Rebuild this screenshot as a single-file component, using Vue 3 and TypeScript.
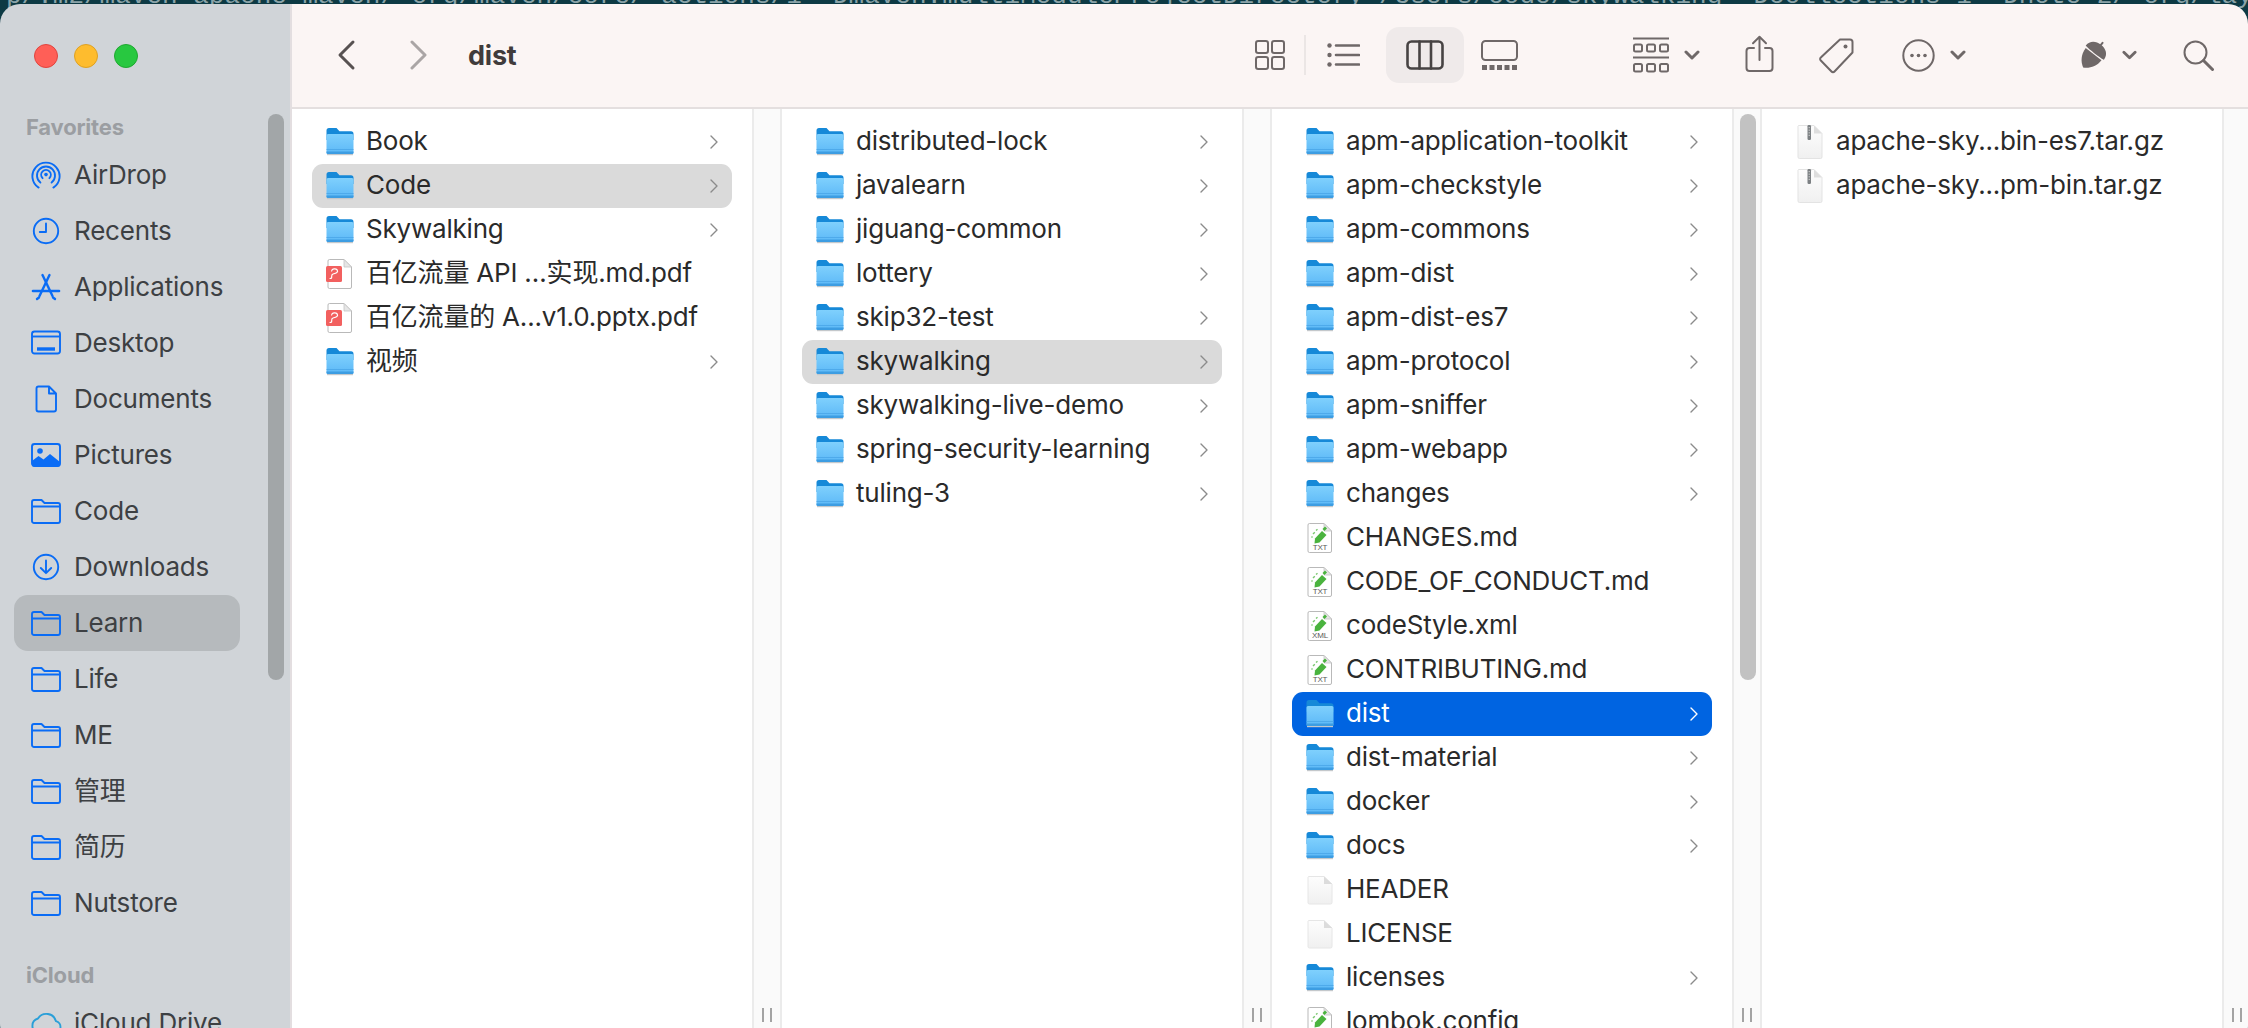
<script setup lang="ts">
type Row = { name: string; icon: string; dir?: boolean; sel?: string };
const side = [
  { l: 'AirDrop', i: 'airdrop' }, { l: 'Recents', i: 'recents' }, { l: 'Applications', i: 'apps' },
  { l: 'Desktop', i: 'desktop' }, { l: 'Documents', i: 'documents' }, { l: 'Pictures', i: 'pictures' },
  { l: 'Code', i: 'fold' }, { l: 'Downloads', i: 'downloads' }, { l: 'Learn', i: 'fold', on: true },
  { l: 'Life', i: 'fold' }, { l: 'ME', i: 'fold' }, { l: '管理', i: 'fold' }, { l: '简历', i: 'fold' }, { l: 'Nutstore', i: 'fold' },
];
const d = (name: string, sel?: string): Row => ({ name, icon: 'folder', dir: true, sel });
const f = (name: string, icon: string): Row => ({ name, icon });
const cols: Row[][] = [
  [d('Book'), d('Code', 'gray'), d('Skywalking'), f('百亿流量 API …实现.md.pdf', 'pdf'), f('百亿流量的 A...v1.0.pptx.pdf', 'pdf'), d('视频')],
  [d('distributed-lock'), d('javalearn'), d('jiguang-common'), d('lottery'), d('skip32-test'), d('skywalking', 'gray'), d('skywalking-live-demo'), d('spring-security-learning'), d('tuling-3')],
  [d('apm-application-toolkit'), d('apm-checkstyle'), d('apm-commons'), d('apm-dist'), d('apm-dist-es7'), d('apm-protocol'), d('apm-sniffer'), d('apm-webapp'), d('changes'),
   f('CHANGES.md', 'txt'), f('CODE_OF_CONDUCT.md', 'txt'), f('codeStyle.xml', 'xml'), f('CONTRIBUTING.md', 'txt'), d('dist', 'blue'), d('dist-material'), d('docker'), d('docs'),
   f('HEADER', 'blank'), f('LICENSE', 'blank'), d('licenses'), f('lombok.config', 'txt')],
  [f('apache-sky...bin-es7.tar.gz', 'zip'), f('apache-sky...pm-bin.tar.gz', 'zip')],
];
const wall = 'p/.m2/maven-apache-maven/ org/maven/core/ actions/1 -Dmaven.multiModuleProjectDirectory=/Users/code/skywalking -Dcollections=1 -Dnote=2/ org/layouts-active-collections=1 -Dnotes=2/ layouts-active-collections=1 -Dnote=';
</script>

<template>
  <div class="page">
    <div class="wall">{{ wall }}</div>

    <svg class="defs" width="0" height="0">
      <defs>
        <linearGradient id="fg" x1="0" y1="0" x2="0" y2="1"><stop offset="0" stop-color="#7fd0fd" /><stop offset="1" stop-color="#5cb8f7" /></linearGradient>
        <linearGradient id="pg" x1="0" y1="0" x2="0" y2="1"><stop offset="0" stop-color="#fdfdfd" /><stop offset="1" stop-color="#f0f0f0" /></linearGradient>
        <symbol id="i-airdrop" viewBox="0 0 30 30"><g fill="none" stroke="currentColor" stroke-width="1.9" stroke-linecap="round"><path d="M7.6 27.6A13.6 13.6 0 1 1 22.4 27.6" /><path d="M9.4 22.6A9 9 0 1 1 20.6 22.6" /><path d="M11.6 18.2A4.8 4.8 0 1 1 18.4 18.2" /></g><circle cx="15" cy="14.6" r="1.8" fill="currentColor" /></symbol>
        <symbol id="i-recents" viewBox="0 0 30 30"><circle cx="15" cy="15" r="12.2" fill="none" stroke="currentColor" stroke-width="1.9" /><path d="M15 7.5V16H8.8" fill="none" stroke="currentColor" stroke-width="1.9" stroke-linecap="round" stroke-linejoin="round" /></symbol>
        <symbol id="i-apps" viewBox="0 0 30 30"><g fill="none" stroke="currentColor" stroke-linecap="round"><path d="M11.5 3L21.5 24" stroke-width="2.4" /><path d="M18.5 3L8.5 24" stroke-width="2.4" /><path d="M2 19H28" stroke-width="2.6" /><path d="M8 25.5L6 27M22 25.5L24 27" stroke-width="2.4" /></g></symbol>
        <symbol id="i-desktop" viewBox="0 0 30 30"><rect x="1" y="3.5" width="28" height="22" rx="2.5" fill="none" stroke="currentColor" stroke-width="1.9" /><path d="M1 8.5H29" stroke="currentColor" stroke-width="1.9" /><path d="M6 21H24" stroke="currentColor" stroke-width="3.4" /></symbol>
        <symbol id="i-documents" viewBox="0 0 30 30"><path d="M7.5 2.5H18L25 9.5V25.5A2 2 0 0 1 23 27.5H7.5A2 2 0 0 1 5.5 25.5V4.5A2 2 0 0 1 7.5 2.5ZM18 2.5V9.5H25" fill="none" stroke="currentColor" stroke-width="1.9" stroke-linejoin="round" /></symbol>
        <symbol id="i-pictures" viewBox="0 0 30 30"><rect x="1" y="4" width="28" height="22" rx="2.5" fill="none" stroke="currentColor" stroke-width="1.9" /><circle cx="9" cy="11" r="2.8" fill="currentColor" /><path d="M1 25V21L7.5 16L12.5 19.5L19 14L29 22V25A1.5 1.5 0 0 1 27.5 26.5H2.5A1.5 1.5 0 0 1 1 25Z" fill="currentColor" /></symbol>
        <symbol id="i-fold" viewBox="0 0 30 30"><path d="M3 4H10.5L13.5 7H27A2 2 0 0 1 29 9V25A2 2 0 0 1 27 27H3A2 2 0 0 1 1 25V6A2 2 0 0 1 3 4ZM1 10.5H29" fill="none" stroke="currentColor" stroke-width="1.9" stroke-linejoin="round" /></symbol>
        <symbol id="i-downloads" viewBox="0 0 30 30"><circle cx="15" cy="15" r="12.2" fill="none" stroke="currentColor" stroke-width="1.9" /><path d="M15 8.5V21M9.8 16L15 21.2L20.2 16" fill="none" stroke="currentColor" stroke-width="1.9" stroke-linecap="round" stroke-linejoin="round" /></symbol>
        <symbol id="i-cloud" viewBox="0 0 32 30"><path d="M8 25H24.5A6 6 0 0 0 26 13.2A10 10 0 0 0 8 10.5A7.5 7.5 0 0 0 8 25Z" fill="none" stroke="currentColor" stroke-width="1.9" stroke-linejoin="round" /></symbol>

        <symbol id="i-folder" viewBox="0 0 28 28">
          <path d="M.5 2.5A2.5 2.5 0 0 1 3 0H10.5L13.5 3.2H25A2.5 2.5 0 0 1 27.5 5.7V12H.5Z" fill="#1689d8" />
          <path d="M.5 7.5A1.5 1.5 0 0 1 2 6H26A1.5 1.5 0 0 1 27.5 7.5V24.5A1.5 1.5 0 0 1 26 26H2A1.5 1.5 0 0 1 .5 24.5Z" fill="url(#fg)" />
          <rect x=".5" y="21.2" width="27" height=".8" fill="#49a5e8" />
          <path d="M.5 23.4H27.5V24.5A1.5 1.5 0 0 1 26 26H2A1.5 1.5 0 0 1 .5 24.5Z" fill="#3d9de2" />
          <rect x="1" y="26" width="26" height="1.2" fill="#c4c8cb" />
        </symbol>
        <symbol id="i-paper" viewBox="0 0 28 32">
          <path d="M3.5 1.5H18L25.5 9V29A1.5 1.5 0 0 1 24 30.5H3.5A1.5 1.5 0 0 1 2 29V3A1.5 1.5 0 0 1 3.5 1.5Z" fill="#fff" stroke="#b9b9b9" />
          <path d="M18 1.5V9H25.5Z" fill="#e6e6e6" stroke="#c4c4c4" stroke-width=".8" />
        </symbol>
        <symbol id="i-pdf" viewBox="0 0 28 32">
          <use href="#i-paper" width="28" height="32" />
          <rect x="0" y="8" width="16" height="16" rx="1.5" fill="#f2605f" />
          <path d="M4 20.5C7.5 20.5 4 17 7 16C10.5 15 12.5 14.2 11.2 12C9.7 10.2 6 10.6 5.6 13" fill="none" stroke="#fff" stroke-width="1.2" stroke-linecap="round" />
        </symbol>
        <symbol id="i-blank" viewBox="0 0 28 32">
          <path d="M2.5 2.5H18L26 10V28.5A1.5 1.5 0 0 1 24.5 30H3.5A1.5 1.5 0 0 1 2 28.5V3Z" fill="url(#pg)" stroke="#e6e6e6" />
          <path d="M18 2.5V10H26Z" fill="#dcdcdc" />
        </symbol>
        <symbol id="i-zip" viewBox="0 0 28 36">
          <path d="M2.5 1.5H18L26 9.5V33A1.5 1.5 0 0 1 24.5 34.5H3.5A1.5 1.5 0 0 1 2 33V2Z" fill="url(#pg)" stroke="#e3e3e3" />
          <path d="M18 1.5V9.5H26Z" fill="#dedede" />
          <rect x="11.5" y="1" width="3.5" height="15" rx="1.2" fill="#7c8083" />
          <path d="M13.2 3V13" stroke="#d8d8d8" stroke-dasharray="1.2 1.4" />
        </symbol>
        <symbol id="i-green" viewBox="0 0 28 32">
          <use href="#i-paper" width="28" height="32" />
          <path d="M9 16.5L16 9L20.5 13L13.5 20.5L8.5 21.5Z" fill="#4ab33e" />
          <path d="M16.5 7L19 4.5L21 6.5L18.5 9Z" fill="#4ab33e" />
          <path d="M7 12L8.8 10.2M10 8.5L11.5 7.2M5.5 15.5L6.5 14.5" stroke="#79c76f" stroke-width="1.4" />
        </symbol>
      </defs>
    </svg>

    <div class="window">
      <aside class="sidebar">
        <div class="lights"><i class="l red"></i><i class="l yellow"></i><i class="l green"></i></div>
        <div class="head">Favorites</div>
        <div v-for="s in side" :key="s.l" class="item" :class="{ on: s.on }">
          <svg class="sico"><use :href="'#i-' + s.i" width="30" height="30" /></svg>
          <span class="slabel">{{ s.l }}</span>
        </div>
        <div class="head icloud">iCloud</div>
        <div class="item">
          <svg class="sico cloud"><use href="#i-cloud" width="32" height="30" /></svg>
          <span class="slabel">iCloud Drive</span>
        </div>
        <div class="sbar"></div>
      </aside>

      <main class="main">
        <header class="toolbar">
          <svg class="t-back" viewBox="0 0 20 32"><path d="M17 3L4 16L17 29" /></svg>
          <svg class="t-fwd" viewBox="0 0 18 32"><path d="M2 3L15 16L2 29" /></svg>
          <h1 class="title">dist</h1>

          <svg class="t-grid" viewBox="0 0 30 30"><rect x="1" y="1" width="12" height="12" rx="2.2" /><rect x="17" y="1" width="12" height="12" rx="2.2" /><rect x="1" y="17" width="12" height="12" rx="2.2" /><rect x="17" y="17" width="12" height="12" rx="2.2" /></svg>
          <i class="t-div"></i>
          <svg class="t-list" viewBox="0 0 33 24"><circle class="dot" cx="2.5" cy="2.5" r="2.2" /><circle class="dot" cx="2.5" cy="12" r="2.2" /><circle class="dot" cx="2.5" cy="21.5" r="2.2" /><path d="M9 2.5H32M9 12H32M9 21.5H32" /></svg>
          <div class="t-btn"><svg class="t-col" viewBox="0 0 38 30"><rect x="1.5" y="1.5" width="35" height="27" rx="4" /><path d="M13.5 1.5V28.5M25 1.5V28.5" /></svg></div>
          <svg class="t-gal" viewBox="0 0 37 30"><rect x="1" y="1" width="35" height="19" rx="3.5" /><g class="dotg"><rect x="1" y="25" width="5" height="5" /><rect x="8.5" y="25" width="5" height="5" /><rect x="16" y="25" width="5" height="5" /><rect x="23.5" y="25" width="5" height="5" /><rect x="31" y="25" width="5" height="5" /></g></svg>
          <svg class="t-group" viewBox="0 0 36 36"><path d="M0 1.5H36M0 20.5H36" /><rect x="1" y="7.5" width="8" height="7" rx="1.5" /><rect x="14" y="7.5" width="8" height="7" rx="1.5" /><rect x="27" y="7.5" width="8" height="7" rx="1.5" /><rect x="1" y="27" width="8" height="7.5" rx="1.5" /><rect x="14" y="27" width="8" height="7.5" rx="1.5" /><rect x="27" y="27" width="8" height="7.5" rx="1.5" /></svg>
          <svg class="t-chev c1" viewBox="0 0 16 10"><path d="M2 2L8 8L14 2" /></svg>
          <svg class="t-share" viewBox="0 0 29 38"><path d="M9 13H4.5A3 3 0 0 0 1.5 16V33A3 3 0 0 0 4.5 36H24.5A3 3 0 0 0 27.5 33V16A3 3 0 0 0 24.5 13H20M14.5 25V2M8 8.2L14.5 1.8L21 8.2" /></svg>
          <svg class="t-tag" viewBox="0 0 37 37"><path d="M22 2.5H32A2.5 2.5 0 0 1 34.5 5V15.5L16.5 34.5A2 2 0 0 1 13.5 34.5L2.8 23.5A2 2 0 0 1 2.8 20.5Z" /><circle class="dot" cx="27.5" cy="9.5" r="2" /></svg>
          <svg class="t-more" viewBox="0 0 33 33"><circle cx="16.5" cy="16.5" r="15.2" /><circle class="dot" cx="10" cy="16.5" r="1.8" /><circle class="dot" cx="16.5" cy="16.5" r="1.8" /><circle class="dot" cx="23" cy="16.5" r="1.8" /></svg>
          <svg class="t-chev c2" viewBox="0 0 16 10"><path d="M2 2L8 8L14 2" /></svg>
          <svg class="t-acorn" viewBox="0 0 30 32">
            <g transform="rotate(38 15 16)">
              <path class="dot" d="M3.5 13C3.5 6.5 8.5 3 15 3C21.5 3 26.5 6.5 26.5 13C26.5 14 3.5 14 3.5 13Z" />
              <path class="dot" d="M5 15H25C25 23 20.5 29 15 32C9.5 29 5 23 5 15Z" />
              <path class="stem" d="M15 3.5V0.5" />
            </g>
          </svg>
          <svg class="t-chev c3" viewBox="0 0 16 10"><path d="M2 2L8 8L14 2" /></svg>
          <svg class="t-search" viewBox="0 0 31 31"><circle cx="12.5" cy="12.5" r="11" /><path d="M20.5 20.5L29.5 29.5" /></svg>
        </header>

        <section class="browser">
          <template v-for="(col, n) in cols" :key="n">
            <div class="col">
              <div v-for="r in col" :key="r.name" class="row" :class="r.sel">
                <svg class="ricon" :class="r.icon"><use :href="'#i-' + (r.icon === 'txt' || r.icon === 'xml' ? 'green' : r.icon)" width="100%" height="100%" /><text v-if="r.icon === 'txt' || r.icon === 'xml'" x="14" y="28" class="mini">{{ r.icon.toUpperCase() }}</text></svg>
                <span class="name">{{ r.name }}</span>
                <svg v-if="r.dir" class="arrow" viewBox="0 0 8 14"><path d="M1 1L7 7L1 13" /></svg>
              </div>
            </div>
            <div class="strip" :class="{ last: n === 3 }">
              <div v-if="n === 2" class="cbar"></div>
              <i class="grip"></i>
            </div>
          </template>
        </section>
      </main>
    </div>
  </div>
</template>

<style>
html, body { margin: 0; height: 100%; overflow: hidden; }
</style>

<style scoped>
.page { position: relative; height: 1028px; overflow: hidden; background: #0d3a44; font-family: Inter, "Noto Sans CJK SC", sans-serif; }
.wall { position: absolute; top: -18px; left: 6px; font: 26px/28px "Liberation Mono", monospace; color: #8aa3a8; white-space: nowrap; }
.defs { position: absolute; }
.window { position: relative; margin-top: 4px; height: 1040px; display: flex; border-radius: 20px; overflow: hidden; }

.sidebar { position: relative; width: 290px; flex: none; background: #d0d4d8; border-right: 2px solid #e3dee0; overflow: hidden; }
.lights { height: 104px; box-sizing: border-box; padding: 40px 0 0 34px; display: flex; gap: 16px; }
.l { width: 24px; height: 24px; border-radius: 50%; box-sizing: border-box; }
.red { background: #ff5f57; border: 1px solid #e0443e; }
.yellow { background: #febc2e; border: 1px solid #dea123; }
.green { background: #28c840; border: 1px solid #1fa830; }
.head { height: 39px; line-height: 39px; padding-left: 26px; font-size: 22px; font-weight: 700; color: #9b9ea2; letter-spacing: -.2px; }
.icloud { margin-top: 25px; }
.item { height: 56px; width: 226px; margin-left: 14px; padding-left: 17px; box-sizing: border-box; display: flex; align-items: center; gap: 13px; border-radius: 14px; font-size: 26px; color: #3d4043; letter-spacing: -.2px; }
.item.on { background: #b6babd; }
.slabel { line-height: 30px; padding-bottom: 1px; }
.sico { width: 30px; height: 30px; flex: none; color: #0a6cf5; }
.sico.cloud { width: 32px; color: #2a9fd8; margin-left: -1px; margin-right: -1px; }
.sbar { position: absolute; left: 268px; top: 110px; width: 16px; height: 566px; border-radius: 8px; background: #a2a6a8; }

.main { flex: 1; min-width: 0; display: flex; flex-direction: column; }
.toolbar { height: 105px; flex: none; box-sizing: border-box; display: flex; align-items: center; padding: 0 34px 1px 44px; background: #fbf5f4; border-bottom: 2px solid #e4dfdf; }
.toolbar svg { flex: none; fill: none; stroke: #6f6868; stroke-width: 2; stroke-linecap: round; stroke-linejoin: round; }
.toolbar .dot { fill: #6f6868; stroke: none; }
.t-back { width: 20px; height: 32px; }
.t-back path { stroke: #575151; stroke-width: 3; }
.t-fwd { width: 18px; height: 32px; margin-left: 54px; }
.t-fwd path { stroke: #aaa5a5; stroke-width: 3; }
.title { margin: 0 auto 0 40px; font-size: 27px; font-weight: 700; color: #403b3b; letter-spacing: -.2px; }
.t-grid { width: 30px; height: 30px; }
.t-div { width: 2px; height: 40px; margin-left: 19px; background: #ebe6e5; }
.t-list { width: 33px; height: 24px; margin-left: 21px; }
.t-list path { stroke-width: 2.6; }
.t-btn { width: 78px; height: 56px; margin-left: 26px; flex: none; border-radius: 13px; background: #efeaea; display: flex; align-items: center; justify-content: center; }
.t-col { width: 38px; height: 30px; }
.toolbar .t-col { stroke: #474343; stroke-width: 2.6; }
.t-gal { width: 37px; height: 30px; margin-left: 17px; }
.toolbar .dotg { fill: #6f6868; stroke: none; }
.t-group { width: 36px; height: 36px; margin-left: 115px; }
.t-chev { width: 16px; height: 10px; }
.toolbar .t-chev { stroke-width: 3; }
.c1 { margin-left: 15px; }
.t-share { width: 29px; height: 38px; margin-left: 45px; margin-top: -3px; }
.t-tag { width: 37px; height: 37px; margin-left: 44px; }
.t-more { width: 33px; height: 33px; margin-left: 47px; }
.c2 { margin-left: 15px; }
.t-acorn { width: 30px; height: 32px; margin-left: 112px; overflow: visible; }
.c3 { width: 15px; margin-left: 14px; }
.t-search { width: 31px; height: 31px; margin-left: 46px; }
.t-search path { stroke-width: 3; }

.browser { flex: 1; min-height: 0; display: flex; background: #fff; overflow: hidden; }
.col { width: 460px; flex: none; box-sizing: border-box; padding: 11px 20px 0; overflow: hidden; }
.row { height: 44px; box-sizing: border-box; padding: 0 14px; display: flex; align-items: center; gap: 12px; border-radius: 11px; font-size: 26px; color: #2a2a2a; letter-spacing: -.2px; white-space: nowrap; }
.row.gray { background: #dadada; }
.row.blue { background: #0064e1; color: #fff; }
.ricon { width: 28px; height: 32px; flex: none; overflow: visible; }
.ricon.folder { height: 28px; }
.ricon.zip { height: 36px; }
.mini { font: 8px "Liberation Sans", sans-serif; fill: #5a5a5a; text-anchor: middle; }
.name { flex: 1; min-width: 0; line-height: 30px; padding-bottom: 2px; }
.arrow { width: 8px; height: 14px; flex: none; fill: none; stroke: #8b8b8b; stroke-width: 1.4; stroke-linecap: round; stroke-linejoin: round; }
.row.blue .arrow { stroke: #fff; }
.strip { position: relative; width: 30px; flex: none; box-sizing: border-box; background: #fafafa; border-left: 2px solid #ebebeb; border-right: 2px solid #ebebeb; }
.strip.last { flex: 1; border-right: 0; }
.grip { position: absolute; left: 8px; top: 899px; width: 10px; height: 14px; border-left: 2px solid #a3a3a3; border-right: 2px solid #a3a3a3; box-sizing: border-box; }
.cbar { position: absolute; left: 6px; top: 5px; width: 16px; height: 566px; border-radius: 8px; background: #c2c2c2; }
</style>
